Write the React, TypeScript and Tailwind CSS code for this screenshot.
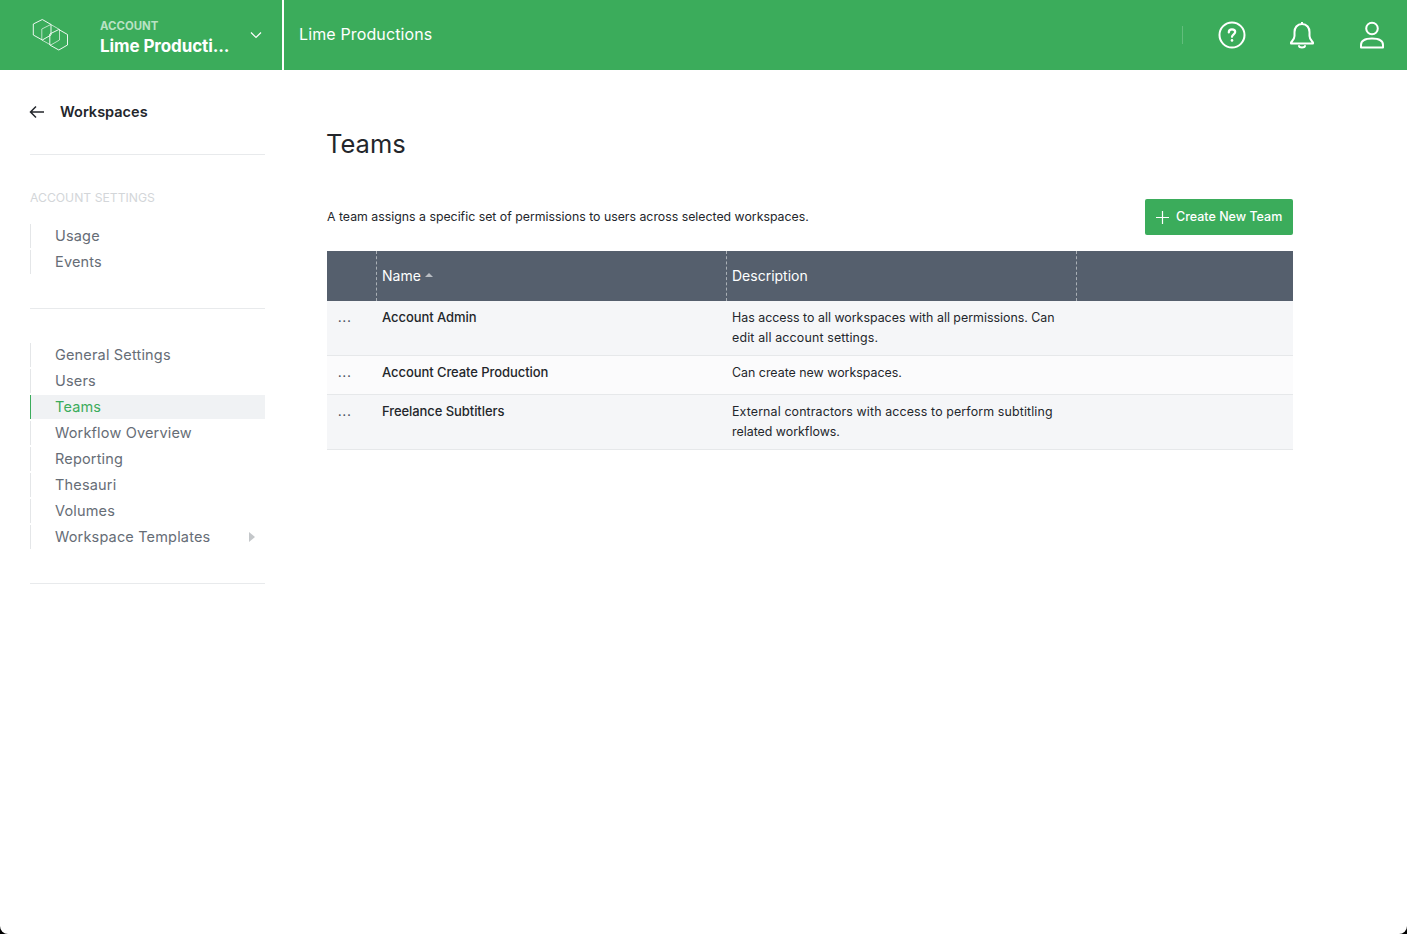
import React from "react";

function Logo() {
  const hex = "M1.3 6 L10.3 1.5 L19 6.5 V17 L10.3 22 L1.3 17 Z";
  return (
    <svg width="38" height="34" viewBox="0 0 38 34" fill="none" stroke="#fff" strokeWidth="1" className="shrink-0">
      <path d={hex} strokeOpacity="0.9" />
      <path d={hex} transform="translate(8.5,5)" strokeOpacity="0.65" />
      <path d={hex} transform="translate(16.5,10)" strokeOpacity="0.9" />
    </svg>
  );
}

function SideItem({ label, active, arrow }: { label: string; active?: boolean; arrow?: boolean }) {
  return (
    <div
      className={
        "relative flex h-6 items-center border-l pl-6 text-[14.5px] tracking-[0.17px] " +
        (active ? "border-[#3bac5b] bg-[#f0f2f4] text-[#3bac5b]" : "border-[#e4e6e8] text-[#666d76]")
      }
    >
      {label}
      {arrow && <span className="absolute right-[10px] top-[7px] h-0 w-0 border-y-[5px] border-l-[6px] border-y-transparent border-l-[#c4c7ca]" />}
    </div>
  );
}

function Row({ name, desc, bg, h }: { name: string; desc: [string, string][]; bg: string; h: string }) {
  return (
    <div className={"flex border-b border-[#e6e8ea] pt-[6px] text-[13px] leading-5 text-[#23262b] " + h + " " + bg}>
      <div className="w-[55px] shrink-0 pl-[11px] pt-[1px] text-[11px] font-semibold tracking-[1.1px] text-[#4a5260]">...</div>
      <div className="w-[350px] shrink-0 font-[450] tracking-[-0.07px]">{name}</div>
      <div className="pt-[1px] text-[12.4px] font-normal">
        {desc.map(([text, cls]) => (
          <div key={text} className={cls}>
            {text}
          </div>
        ))}
      </div>
    </div>
  );
}

export default function App() {
  return (
    <div className="h-[934px] w-full overflow-hidden bg-black">
      <div className="flex h-full flex-col overflow-hidden rounded-b-lg bg-white font-['Inter',sans-serif]">
        <header className="flex h-[70px] shrink-0 items-center bg-[#3bac5b] text-white">
          <div className="flex h-full w-[282px] shrink-0 items-center pl-[32px]">
            <Logo />
            <div className="ml-[30px] w-[142px] pt-[2px]">
              <div className="pt-[1px] text-[11.4px] font-bold leading-4 text-[#b9e2c4]">ACCOUNT</div>
              <div className="mt-[2px] text-[17px] font-bold leading-5 tracking-[-0.1px]">Lime Producti...</div>
            </div>
            <svg width="12" height="8" viewBox="0 0 12 8" fill="none" stroke="#fff" strokeWidth="1.2" className="ml-[8px]">
              <path d="M1 1.5 L6 6.5 L11 1.5" />
            </svg>
          </div>
          <div className="h-full w-[2px] shrink-0 bg-white" />
          <div className="ml-[15px] pb-[2px] text-[16px] tracking-[0.13px] text-white">Lime Productions</div>
          <div className="ml-auto h-[18px] w-px bg-[#62bd7c]" />
          <div className="ml-[35px] flex items-center pr-[22px]">
            <svg width="28" height="28" viewBox="0 0 28 28" fill="none" stroke="#fff" strokeWidth="2">
              <circle cx="14" cy="14" r="12.5" />
              <path d="M10.8 11.4 C10.8 9.4 12.2 8.4 14 8.4 C15.8 8.4 17.2 9.4 17.2 11 C17.2 13.2 14 13.4 14 15.8" strokeLinecap="round" strokeWidth="2.2" />
              <circle cx="14" cy="19.4" r="1.3" fill="#fff" stroke="none" />
            </svg>
            <svg width="26" height="28" viewBox="0 0 26 28" fill="none" stroke="#fff" strokeWidth="2" className="ml-[43px]">
              <path d="M13 1 V3 M13 3 C8 3 5.5 7 5.5 11 V15 C5.5 18 3.5 19.5 2 21.5 V22.5 H24 V21.5 C22.5 19.5 20.5 18 20.5 15 V11 C20.5 7 18 3 13 3 Z" strokeLinejoin="round" />
              <path d="M10 25 C10.5 27 15.5 27 16 25" strokeLinecap="round" />
            </svg>
            <svg width="26" height="28" viewBox="0 0 26 28" fill="none" stroke="#fff" strokeWidth="2" className="ml-[44px]">
              <circle cx="13" cy="7.5" r="5.8" />
              <path d="M2 26.5 V24 C2 20 6 17.5 13 17.5 C20 17.5 24 20 24 24 V26.5 Z" strokeLinejoin="round" />
            </svg>
          </div>
        </header>
        <div className="flex min-h-0 flex-1">
          <aside className="ml-[30px] w-[235px] shrink-0">
            <div className="flex h-[85px] items-start border-b border-[#e8eaec] pt-[33px] text-[14.5px] font-semibold text-[#23262b]">
              <svg width="16" height="14" viewBox="0 0 16 14" fill="none" stroke="#23262b" strokeWidth="1.5" className="-ml-[1px] mt-[2px]">
                <path d="M15 7 H1.5 M7 1.5 L1.5 7 L7 12.5" />
              </svg>
              <span className="ml-[15px] leading-[18px]">Workspaces</span>
            </div>
            <div className="mt-[35px] text-[12.2px] leading-4 text-[#d3d6d9]">ACCOUNT SETTINGS</div>
            <div className="mt-[18px] flex flex-col gap-[2px]">
              <SideItem label="Usage" />
              <SideItem label="Events" />
            </div>
            <div className="mt-[34px] border-b border-[#e8eaec]" />
            <div className="mt-[34px] flex flex-col gap-[2px]">
              <SideItem label="General Settings" />
              <SideItem label="Users" />
              <SideItem label="Teams" active />
              <SideItem label="Workflow Overview" />
              <SideItem label="Reporting" />
              <SideItem label="Thesauri" />
              <SideItem label="Volumes" />
              <SideItem label="Workspace Templates" arrow />
            </div>
            <div className="mt-[34px] border-b border-[#e8eaec]" />
          </aside>
          <main className="ml-[62px] w-[966px] shrink-0">
            <h1 className="-ml-[1px] mt-[58px] text-[25.5px] font-normal leading-8 text-[#23262b]">Teams</h1>
            <div className="mt-[39px] flex h-9 items-center justify-between">
              <p className="text-[12.32px] text-[#23262b]">A team assigns a specific set of permissions to users across selected workspaces.</p>
              <button className="flex h-9 w-[148px] items-center rounded-[2px] bg-[#3bac5b] pl-[11px] text-[12.5px] font-medium text-white">
                <svg width="13" height="13" viewBox="0 0 13 13" stroke="#fff" strokeWidth="1.2" className="mr-[7px]">
                  <path d="M6.5 0 V13 M0 6.5 H13" />
                </svg>
                Create New Team
              </button>
            </div>
            <div className="mt-4">
              <div className="flex h-[50px] items-center bg-[#555f6d] text-[14px] text-white">
                <div className="h-full w-[50px] shrink-0 border-r border-dashed border-[#aab0b6]" />
                <div className="flex h-full w-[350px] shrink-0 items-center border-r border-dashed border-[#aab0b6] pb-[2px] pl-[5px]">
                  Name
                  <span className="ml-[4px] h-0 w-0 border-x-[4.5px] border-b-[4px] border-x-transparent border-b-[#b9bdc3]" />
                </div>
                <div className="flex h-full w-[350px] shrink-0 items-center border-r border-dashed border-[#aab0b6] pb-[2px] pl-[5px]">Description</div>
              </div>
              <Row
                h="h-[55px]"
                bg="bg-[#f5f6f8]"
                name="Account Admin"
                desc={[
                  ["Has access to all workspaces with all permissions. Can", ""],
                  ["edit all account settings.", "tracking-[0.16px]"],
                ]}
              />
              <Row h="h-[39px]" bg="bg-[#fbfbfc]" name="Account Create Production" desc={[["Can create new workspaces.", ""]]} />
              <Row
                h="h-[55px]"
                bg="bg-[#f5f6f8]"
                name="Freelance Subtitlers"
                desc={[
                  ["External contractors with access to perform subtitling", "tracking-[0.13px]"],
                  ["related workflows.", ""],
                ]}
              />
            </div>
          </main>
        </div>
      </div>
    </div>
  );
}
